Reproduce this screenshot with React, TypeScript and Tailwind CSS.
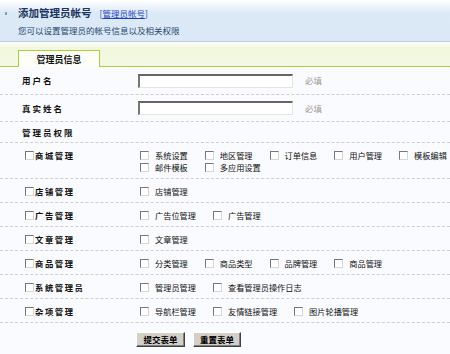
import React from 'react';

interface PermRow {
  label: string;
  lines: string[][];
}

const permRows: PermRow[] = [
  {
    label: '商城管理',
    lines: [
      ['系统设置', '地区管理', '订单信息', '用户管理', '模板编辑'],
      ['邮件模板', '多应用设置'],
    ],
  },
  { label: '店铺管理', lines: [['店铺管理']] },
  { label: '广告管理', lines: [['广告位管理', '广告管理']] },
  { label: '文章管理', lines: [['文章管理']] },
  { label: '商品管理', lines: [['分类管理', '商品类型', '品牌管理', '商品管理']] },
  { label: '系统管理员', lines: [['管理员管理', '查看管理员操作日志']] },
  { label: '杂项管理', lines: [['导航栏管理', '友情链接管理', '图片轮播管理']] },
];

const Box: React.FC = () => (
  <span className="inline-block w-[9px] h-[9px] shrink-0 bg-white border border-t-[#777] border-l-[#777] border-r-[#d6d6d6] border-b-[#d6d6d6]" />
);

const TextInput: React.FC = () => (
  <div className="w-[155px] h-[14px] shrink-0 bg-white border-t-2 border-l-2 border-r border-b border-t-[#666] border-l-[#777] border-r-[#e4e4dc] border-b-[#e4e4dc]" />
);

const App: React.FC = () => {
  return (
    <div className="w-[450px] h-[354px] overflow-hidden bg-[#fafbfe] font-['Noto_Sans_CJK_SC',sans-serif] text-[#111]">
      {/* header */}
      <div className="h-[42px] border-b border-[#bccbdd] bg-[linear-gradient(to_bottom,#ffffff_0px,#dce9f6_13px,#dbe8f5_100%)] pl-[18px] relative">
        <span className="absolute left-[5px] top-[12px] w-[2px] h-[3px] bg-[#8a9bb0]" />
        <div className="flex items-center h-[26px] pt-[1px]">
          <span className="text-[10.5px] font-bold leading-none text-[#1a3560]">添加管理员帐号</span>
          <span className="ml-[8px] text-[8.5px] leading-none text-[#1d3fc4]">
            [<span className="underline">管理员帐号</span>]
          </span>
        </div>
        <div className="text-[8.5px] leading-none text-[#27466f]">您可以设置管理员的帐号信息以及相关权限</div>
      </div>

      {/* tabs */}
      <div className="h-[25px] border-b border-[#a6d03c] bg-[linear-gradient(to_bottom,#ffffff_0px,#f1f7dc_6px,#f4f8e3_100%)] flex items-end pl-[18px]">
        <div className="w-[82px] h-[17px] -mb-px bg-[#fdfef8] border border-b-0 border-[#a6d03c] flex items-center justify-center text-[9px] font-bold leading-none">
          管理员信息
        </div>
      </div>

      {/* basic fields */}
      <div className="h-[28px] flex items-center border-b border-dashed border-[#cfcfcf]">
        <div className="w-[138px] shrink-0 pl-[22px] text-[8.5px] font-bold tracking-[2px]">用户名</div>
        <TextInput />
        <span className="ml-[12px] text-[8.5px] text-[#9a9a9a]">必填</span>
      </div>
      <div className="h-[27px] flex items-center border-b border-dashed border-[#cfcfcf]">
        <div className="w-[138px] shrink-0 pl-[22px] text-[8.5px] font-bold tracking-[2px]">真实姓名</div>
        <TextInput />
        <span className="ml-[12px] text-[8.5px] text-[#9a9a9a]">必填</span>
      </div>
      <div className="h-[21px] flex items-center border-b border-dashed border-[#cfcfcf]">
        <div className="pl-[22px] text-[8.5px] font-bold tracking-[2px]">管理员权限</div>
      </div>

      {/* permissions */}
      {permRows.map((row) => (
        <div
          key={row.label}
          className="flex items-start pt-[6px] pb-[5px] border-b border-dashed border-[#cfcfcf] leading-[12px]"
        >
          <div className="w-[140px] shrink-0 pl-[25px] h-[12px] flex items-center gap-[1px]">
            <Box />
            <span className="text-[8.3px] font-bold tracking-[1.6px]">{row.label}</span>
          </div>
          <div className="flex flex-col">
            {row.lines.map((line, i) => (
              <div key={i} className="flex h-[12px] items-center whitespace-nowrap">
                {line.map((item) => (
                  <div key={item} className="flex items-center mr-[17px]">
                    <Box />
                    <span className="ml-[6px] text-[8.2px]">{item}</span>
                  </div>
                ))}
              </div>
            ))}
          </div>
        </div>
      ))}

      {/* buttons */}
      <div className="flex gap-[8px] pl-[136px] pt-[9px]">
        <button className="w-[49px] h-[15px] bg-[#d4d0c8] border border-t-white border-l-white border-r-[#404040] border-b-[#404040] shadow-[inset_-1px_-1px_0_#808080] text-[8.5px] leading-none font-bold text-black">
          提交表单
        </button>
        <button className="w-[48px] h-[15px] bg-[#d4d0c8] border border-t-white border-l-white border-r-[#404040] border-b-[#404040] shadow-[inset_-1px_-1px_0_#808080] text-[8.5px] leading-none font-bold text-black">
          重置表单
        </button>
      </div>
    </div>
  );
};

export default App;
